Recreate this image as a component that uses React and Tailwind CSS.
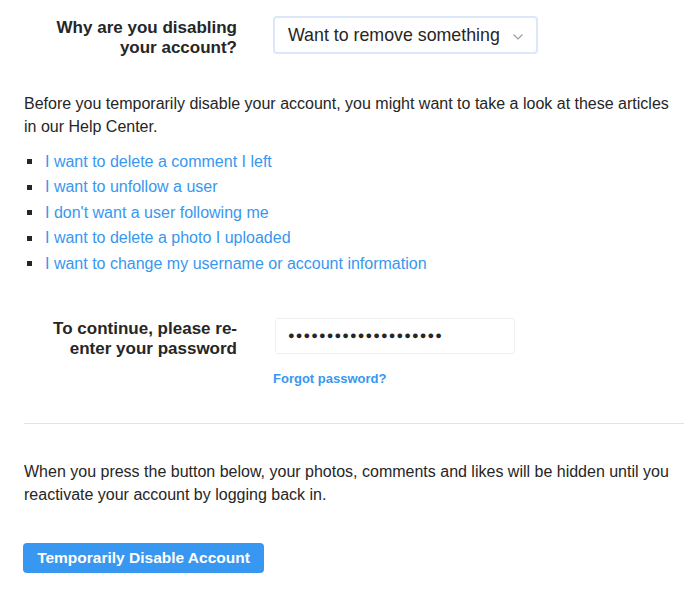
import React from "react";

const links = [
  "I want to delete a comment I left",
  "I want to unfollow a user",
  "I don't want a user following me",
  "I want to delete a photo I uploaded",
  "I want to change my username or account information",
];

function Chevron() {
  return (
    <svg width="12" height="8" viewBox="0 0 12 8" className="ml-3 mt-[3px]">
      <path d="M1.5 1.5 L6 6 L10.5 1.5" fill="none" stroke="#9aa0a6" strokeWidth="1.2" />
    </svg>
  );
}

export default function App() {
  return (
    <div
      className="w-[694px] h-[600px] bg-white text-[#262626] overflow-hidden"
      style={{ fontFamily: '"Liberation Sans", Arial, sans-serif' }}
    >
      {/* reason select row */}
      <div className="flex items-start pt-[16px]">
        <div className="w-[237px] text-right text-[17px] leading-[20px] font-semibold pt-[2px]">
          Why are you disabling
          <br />
          your account?
        </div>
        <div className="ml-[36px] h-[38px] pl-[13px] pr-[12px] flex items-center border-2 border-[#dde7fb] rounded-[4px] text-[17.8px] text-[#262626]">
          Want to remove something
          <Chevron />
        </div>
      </div>

      {/* articles */}
      <p className="mx-[24px] mt-[34px] text-[16px] leading-[23px]">
        Before you temporarily disable your account, you might want to take a look at these articles in our Help Center.
      </p>
      <ul className="mx-[24px] mt-[11px] flex flex-col">
        {links.map((l) => (
          <li key={l} className="flex items-center h-[25.5px] text-[16px]">
            <span className="w-[5px] h-[5px] bg-[#262626] ml-[3px] mr-[13px]" />
            <a className="text-[#3897f0]">{l}</a>
          </li>
        ))}
      </ul>

      {/* password */}
      <div className="flex items-start mt-[41px]">
        <div className="w-[237px] text-right text-[17px] leading-[20px] font-semibold pt-[1px]">
          To continue, please re-
          <br />
          enter your password
        </div>
        <div className="ml-[38px] flex flex-col">
          <div className="w-[240px] h-[36px] px-[12px] flex items-center border border-[#efefef] rounded-[3px] bg-white text-[11px] tracking-[1.1px] text-[#262626]">
            ●●●●●●●●●●●●●●●●●●●●
          </div>
          <a className="text-[#3897f0] text-[13px] font-semibold mt-[15px] -ml-[2px]">Forgot password?</a>
        </div>
      </div>

      <div className="ml-[24px] mr-[10px] mt-[35px] h-px bg-[#e3e3e3]" />

      <p className="mx-[24px] mt-[36px] text-[16px] leading-[23px]">
        When you press the button below, your photos, comments and likes will be hidden until you reactivate your account by logging back in.
      </p>

      <button className="ml-[23px] mt-[37px] w-[241px] h-[30px] rounded-[4px] bg-[#3897f0] text-white text-[15.5px] font-semibold">
        Temporarily Disable Account
      </button>
    </div>
  );
}
